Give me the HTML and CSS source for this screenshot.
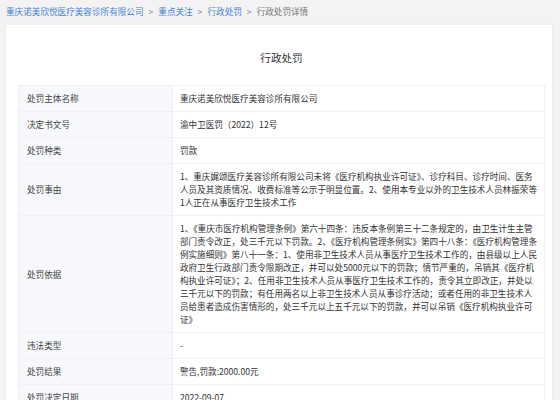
FILE: index.html
```html
<!DOCTYPE html>
<html lang="zh-CN">
<head>
<meta charset="utf-8">
<title>行政处罚详情</title>
<link rel="stylesheet" href="styles.css">
</head>
<body>
<nav class="crumbs">
  <a class="crumb-link" href="#">重庆诺美欣悦医疗美容诊所有限公司</a><span class="sep">&gt;</span><a class="crumb-link" href="#">重点关注</a><span class="sep">&gt;</span><a class="crumb-link" href="#">行政处罚</a><span class="sep">&gt;</span><span class="crumb-current">行政处罚详情</span>
</nav>
<main class="card">
  <h1 class="title">行政处罚</h1>
  <table class="detail">
    <tr><th>处罚主体名称</th><td>重庆诺美欣悦医疗美容诊所有限公司</td></tr>
    <tr><th>决定书文号</th><td>渝中卫医罚（2022）12号</td></tr>
    <tr><th>处罚种类</th><td>罚款</td></tr>
    <tr><th>处罚事由</th><td>1、重庆娓颂医疗美容诊所有限公司未将《医疗机构执业许可证》、诊疗科目、诊疗时间、医务<br>人员及其资质情况、收费标准等公示于明显位置。2、使用本专业以外的卫生技术人员林振荣等<br>1人正在从事医疗卫生技术工作</td></tr>
    <tr><th>处罚依据</th><td>1、《重庆市医疗机构管理条例》第六十四条：违反本条例第三十二条规定的，由卫生计生主管<br>部门责令改正，处三千元以下罚款。2、《医疗机构管理条例实》第四十八条：《医疗机构管理条<br>例实施细则》第八十一条：1、使用非卫生技术人员从事医疗卫生技术工作的，由县级以上人民<br>政府卫生行政部门责令限期改正，并可以处5000元以下的罚款；情节严重的，吊销其《医疗机<br>构执业许可证》；2、任用非卫生技术人员从事医疗卫生技术工作的，责令其立即改正，并处以<br>三千元以下的罚款；有任用两名以上非卫生技术人员从事诊疗活动；或者任用的非卫生技术人<br>员给患者造成伤害情形的，处三千元以上五千元以下的罚款，并可以吊销《医疗机构执业许可<br>证》</td></tr>
    <tr><th>违法类型</th><td>-</td></tr>
    <tr><th>处罚结果</th><td>警告,罚款:2000.00元</td></tr>
    <tr><th>处罚决定日期</th><td>2022-09-07</td></tr>
  </table>
</main>
</body>
</html>
```
FILE: styles.css
```css
html, body {
  margin: 0;
  padding: 0;
  background: #f3f3f3;
  font-family: "Noto Sans CJK SC", "Noto Sans", sans-serif;
  color: #333;
}
.crumbs {
  padding: 5px 6px 2px;
  font-size: 8.6px;
  line-height: 12px;
  white-space: nowrap;
}
.crumb-link {
  color: #4583d8;
  text-decoration: none;
}
.sep {
  color: #888;
  margin: 0 5px;
}
.crumb-current {
  color: #777;
}
.card {
  margin: 6px 8px 0 6px;
  background: #fff;
  padding: 25px 7px 20px 12px;
  box-shadow: 0 0 2px rgba(0,0,0,0.06);
}
.title {
  margin: 0 0 19px;
  font-size: 10.6px;
  line-height: 16px;
  font-weight: normal;
  text-align: center;
  color: #333;
}
.detail {
  width: 100%;
  border-collapse: collapse;
  font-size: 8.6px;
  line-height: 13px;
  border: 1px solid #eef0f4;
}
.detail th, .detail td {
  border-bottom: 1px solid #eef0f4;
  padding: 6px 7px 6px 8px;
  vertical-align: middle;
  text-align: left;
  font-weight: normal;
  white-space: nowrap;
}
.detail th {
  width: 140px;
  background: #f6f8fb;
  color: #444;
  border-right: 1px solid #eef0f4;
}
.detail td {
  color: #333;
  padding-left: 7px;
}
```
